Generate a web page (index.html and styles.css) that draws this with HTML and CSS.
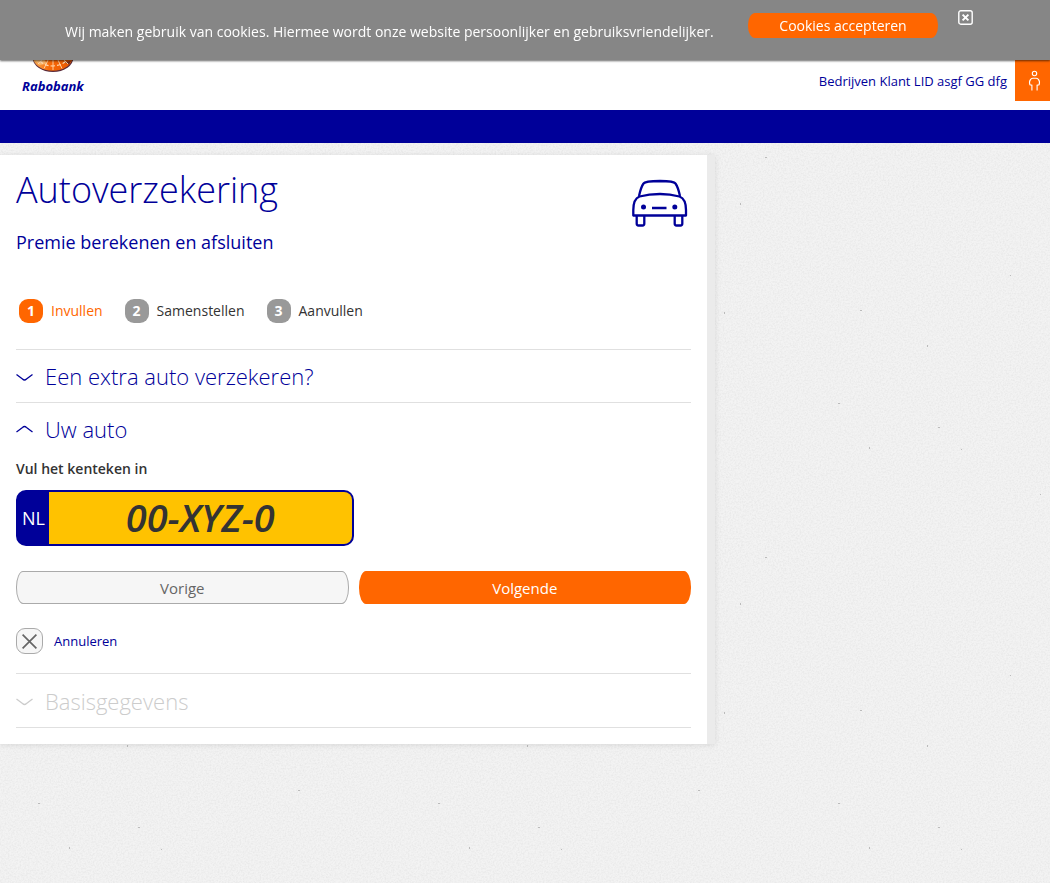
FILE: index.html
```html
<!DOCTYPE html>
<html lang="nl">
<head>
<meta charset="utf-8">
<meta name="viewport" content="width=device-width, initial-scale=1">
<title>Autoverzekering - Rabobank</title>
<link rel="stylesheet" href="styles.css">
</head>
<body>
<div class="cookie-bar" role="region" aria-label="Cookies">
  <p class="cookie-text">Wij maken gebruik van cookies. Hiermee wordt onze website persoonlijker en gebruiksvriendelijker.</p>
  <button class="cookie-accept" type="button">Cookies accepteren</button>
  <button class="cookie-close" type="button" aria-label="Sluiten">
    <svg width="15" height="15" viewBox="0 0 15 15" fill="none" stroke="#fff"><rect x="0.8" y="0.8" width="13.4" height="13.4" rx="2" stroke-width="1.4"/><path d="M4.6 4.6l5.8 5.8M10.4 4.6l-5.8 5.8" stroke-width="2"/></svg>
  </button>
</div>

<header class="site-header">
  <a class="logo" href="#">
    <svg class="logo-mark" width="42" height="58" viewBox="0 0 42 58" aria-hidden="true">
      <defs>
        <linearGradient id="disc" x1="0" x2="1"><stop offset="0" stop-color="#f9b05a"/><stop offset="0.4" stop-color="#f76a08"/><stop offset="1" stop-color="#e85500"/></linearGradient>
      </defs>
      <circle cx="21" cy="14" r="6" fill="#009"/>
      <ellipse cx="21" cy="42.500" rx="20.500" ry="14.500" fill="#5b2b3a"/>
      <ellipse cx="20.800" cy="42" rx="19.800" ry="13.800" fill="url(#disc)"/>
      <path d="M3 45l9-1 3 5-8 1z" fill="#fbc985" opacity="0.700"/>
      <path d="M32 47l5 2.500 2-3.500z" fill="#6b2d20"/>
      <path d="M21 44V55M25 43L30 53.500M17 43L12 53.500M29 42L36 49M13 42L6 49" fill="none" stroke="#ffd9b0" stroke-width="0.900"/>
      <path d="M8 46Q12 50.500 20 51Q30 50.500 34 46" fill="none" stroke="#ffd9b0" stroke-width="1.200" stroke-dasharray="4 2"/>
    </svg>
    <span class="logo-name">Rabobank</span>
  </a>
  <div class="account">
    <span class="account-name">Bedrijven Klant LID asgf GG dfg</span>
    <button class="account-button" type="button" aria-label="Profiel">
      <svg width="13" height="22" viewBox="0 0 13 22" fill="none" stroke="#fff" stroke-width="1.100"><circle cx="6.500" cy="3.500" r="2.200"/><path d="M3.900 20.500V15.200L1.900 14.800Q0.800 11.500 2.600 9.300Q3.700 8.200 5 8.200H8Q9.300 8.200 10.400 9.300Q12.200 11.500 11.100 14.800L9.100 15.200V20.500"/></svg>
    </button>
  </div>
</header>
<nav class="main-nav" aria-label="Hoofdmenu"></nav>

<main class="panel">
  <div class="panel-head">
    <div>
      <h1 class="title">Autoverzekering</h1>
      <p class="subtitle">Premie berekenen en afsluiten</p>
    </div>
    <svg class="car" width="56" height="48" viewBox="0 0 56 48" fill="none" stroke="#009" stroke-width="2.300" aria-hidden="true">
      <path d="M7 17Q9 8 11.500 4.500Q13 2.200 28 2Q42 2.200 43.500 4.500Q46 8 48 17"/>
      <path d="M1.300 36.500V31Q1.300 20 7.500 17.500Q17 15 28 15Q38 15 47.500 17.500Q54 20 54 31V36.500Z" stroke-linejoin="round"/>
      <path d="M4.700 36.500V44.500Q4.700 46.500 6.500 46.500H10.500Q12.300 46.500 12.300 44.500V36.500M42.700 36.500V44.500Q42.700 46.500 44.500 46.500H48.500Q50.300 46.500 50.300 44.500V36.500M20 29H34.500"/>
      <circle cx="11.500" cy="28" r="2.500" fill="#009" stroke="none"/><circle cx="42.800" cy="28" r="2.500" fill="#009" stroke="none"/>
    </svg>
  </div>

  <ol class="steps">
    <li class="step step-active"><span class="step-number">1</span>Invullen</li>
    <li class="step"><span class="step-number">2</span>Samenstellen</li>
    <li class="step"><span class="step-number">3</span>Aanvullen</li>
  </ol>

  <section class="section">
    <h2 class="section-title"><button class="toggle" type="button" aria-expanded="false">
      <svg width="17" height="12" viewBox="0 0 17 12" fill="none" stroke="currentColor" stroke-width="1.300"><path d="M0.500 4.500L6.500 9Q8.500 11 10.500 9L16.500 4.500"/></svg>Een extra auto verzekeren?</button></h2>
  </section>

  <section class="section">
    <h2 class="section-title"><button class="toggle" type="button" aria-expanded="true">
      <svg width="17" height="12" viewBox="0 0 17 12" fill="none" stroke="currentColor" stroke-width="1.300"><path d="M0.500 9L6.500 4.500Q8.500 2.500 10.500 4.500L16.500 9"/></svg>Uw auto</button></h2>
    <form class="car-form">
      <label class="plate-label" for="plate">Vul het kenteken in</label>
      <div class="plate">
        <span class="plate-country">NL</span>
        <input class="plate-input" id="plate" type="text" value="00-XYZ-0">
      </div>
      <div class="actions">
        <button class="button button-back" type="button">Vorige</button>
        <button class="button button-next" type="button">Volgende</button>
      </div>
      <a class="cancel" href="#">
        <span class="cancel-icon"><svg width="15" height="15" viewBox="0 0 15 15" stroke="#666" stroke-width="1.700"><path d="M0.600 0.600L14.400 14.400M14.400 0.600L0.600 14.400"/></svg></span>Annuleren</a>
    </form>
  </section>

  <section class="section section-last">
    <h2 class="section-title"><button class="toggle" type="button" disabled>
      <svg width="17" height="12" viewBox="0 0 17 12" fill="none" stroke="currentColor" stroke-width="1.300"><path d="M0.500 4L6.500 8.500Q8.500 10.500 10.500 8.500L16.500 4"/></svg>Basisgegevens</button></h2>
  </section>
</main>
</body>
</html>
```
FILE: styles.css
```css
* {
  box-sizing: border-box;
}

body {
  margin: 0;
  min-height: 100vh;
  color: #333;
  font: 14px/20px "Open Sans", "Noto Sans", sans-serif;
  background-color: #f3f3f3;
  background-image: url("data:image/svg+xml,%3Csvg xmlns='http://www.w3.org/2000/svg' width='400' height='400'%3E%3Cfilter id='n' x='0' y='0' width='100%25' height='100%25'%3E%3CfeTurbulence type='fractalNoise' baseFrequency='.6' numOctaves='3' stitchTiles='stitch'/%3E%3CfeColorMatrix values='0 0 0 0 .45 0 0 0 0 .45 0 0 0 0 .45 .32 0 0 0 -.11'/%3E%3C/filter%3E%3Crect width='400' height='400' filter='url(%23n)'/%3E%3Cg fill='%23bbb'%3E%3Cpath d='M38 3h2v1h-2zM69 47h1v2h-1zM138 27h2v1h-2zM161 49h1v1h-1zM266 166h2v1h-2zM365 157h2v1h-2zM340 203h1v2h-1zM210 275h1v1h-1zM60 310h2v1h-2zM127 345h1v2h-1zM298 390h2v1h-2zM240 94h1v1h-1zM324 312h1v2h-1z'/%3E%3C/g%3E%3C/svg%3E");
}

button,
input {
  font-family: inherit;
}

button {
  padding: 0;
  border: 0;
  background: none;
  cursor: pointer;
}

.cookie-bar {
  position: fixed;
  inset: 0 0 auto;
  z-index: 10;
  display: flex;
  align-items: flex-start;
  gap: 20px;
  min-height: 60px;
  padding: 10px 77px 10px 65px;
  color: #fff;
  background: #868686;
  box-shadow: 0 1px 2px rgba(0, 0, 0, 0.6);
}

.cookie-text {
  flex: 1;
  margin: 12px 0 0;
}

.cookie-accept {
  width: 190px;
  height: 25px;
  margin-top: 3px;
  border-radius: 7px / 12px;
  color: #fff;
  font-size: 14px;
  background: #f60;
}

.cookie-close svg {
  display: block;
}

.site-header {
  display: flex;
  justify-content: space-between;
  height: 110px;
  background: #fff;
}

.logo {
  display: flex;
  flex-direction: column;
  align-items: center;
  padding: 15px 0 0 22px;
  color: #009;
  text-decoration: none;
}

.logo-name {
  margin-top: 3px;
  font-size: 13px;
  font-style: italic;
  font-weight: 700;
}

.account {
  display: flex;
  align-items: center;
  gap: 8px;
  height: 41px;
  margin-top: 60px;
  color: #009;
  font-size: 13px;
}

.account-button {
  display: flex;
  align-items: center;
  justify-content: center;
  width: 35px;
  height: 41px;
  padding-left: 3px;
  background: #f60;
}

.main-nav {
  height: 33px;
  background: #009;
}

.panel {
  width: 68.1%;
  margin-top: 12px;
  padding: 16px;
  border-right: 8px solid #ebebeb;
  background: #fff;
  box-shadow: 0 1px 6px rgba(0, 0, 0, 0.1);
}

.panel-head {
  display: flex;
  justify-content: space-between;
  padding-right: 3px;
}

.title {
  margin: 0;
  color: #009;
  font-size: 36px;
  font-weight: 300;
  line-height: 38px;
}

.subtitle {
  margin: 21px 0 0;
  color: #009;
  font-size: 18px;
  line-height: 24px;
}

.car {
  margin-top: 8px;
}

.steps {
  display: flex;
  gap: 22px;
  margin: 45px 0 26px;
  padding: 0 0 0 3px;
  list-style: none;
}

.step {
  display: flex;
  align-items: center;
  gap: 8px;
}

.step-number {
  width: 24px;
  border-radius: 9px;
  color: #fff;
  font-weight: 700;
  line-height: 24px;
  text-align: center;
  background: #999;
}

.step-active {
  color: #f60;
}

.step-active .step-number {
  background: #f60;
}

.section {
  border-top: 1px solid #e0e0e0;
}

.section-last {
  border-bottom: 1px solid #e0e0e0;
}

.section-title {
  margin: 0;
  font-size: 22px;
  font-weight: 300;
}

.toggle {
  display: flex;
  align-items: center;
  gap: 12px;
  width: 100%;
  height: 52px;
  color: #009;
  font-size: 22px;
  font-weight: 300;
}

.toggle:disabled {
  height: 53px;
  color: #ccc;
}

.plate-label {
  display: block;
  margin-top: 4px;
  font-weight: 600;
}

.plate {
  display: flex;
  width: 50%;
  height: 56px;
  margin-top: 11px;
  overflow: hidden;
  border: 2px solid #009;
  border-radius: 10px;
  background: #009;
}

.plate-country {
  width: 31px;
  color: #fff;
  font-size: 18px;
  line-height: 52px;
  text-align: center;
}

.plate-input {
  flex: 1;
  min-width: 0;
  padding: 0 0 3px;
  border: 0;
  color: #333;
  font-size: 38px;
  font-style: italic;
  font-weight: 600;
  text-align: center;
  background: #ffc200;
}

.actions {
  display: grid;
  grid-template-columns: 1fr 1fr;
  gap: 10px;
  margin-top: 25px;
}

.button {
  height: 33px;
  border-radius: 7px / 16px;
  font-size: 15px;
}

.button-back {
  border: 1px solid #aaa;
  color: #666;
  background: #f6f6f6;
}

.button-next {
  color: #fff;
  background: #f60;
}

.cancel {
  display: inline-flex;
  align-items: center;
  gap: 11px;
  margin: 24px 0 19px;
  color: #009;
  font-size: 13px;
  text-decoration: none;
}

.cancel-icon {
  display: grid;
  place-items: center;
  width: 27px;
  height: 26px;
  border: 1px solid #aaa;
  border-radius: 9px;
  background: #f6f6f6;
}
```
